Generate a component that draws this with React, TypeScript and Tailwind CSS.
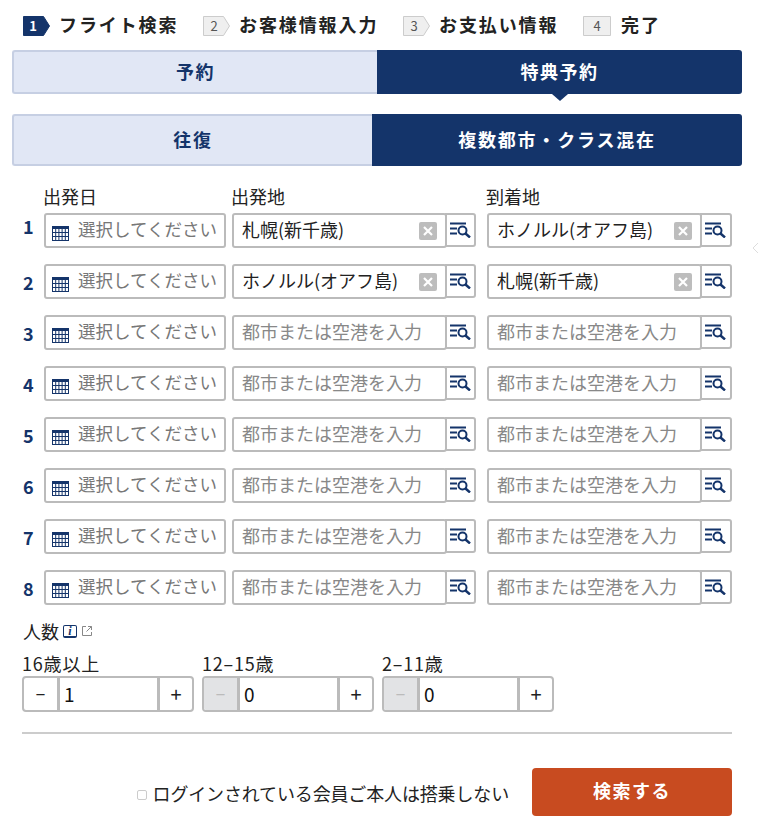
const font = { fontFamily: '"Noto Sans CJK JP", "Liberation Sans", sans-serif' };

const steps = [
  { n: "1", label: "フライト検索", active: true, arrow: true, width: "w-[180px]" },
  { n: "2", label: "お客様情報入力", arrow: true, width: "w-[200px]" },
  { n: "3", label: "お支払い情報", arrow: true, width: "w-[180px]" },
  { n: "4", label: "完了", width: "" },
];

const rows = [
  { n: 1, from: "札幌(新千歳)", to: "ホノルル(オアフ島)" },
  { n: 2, from: "ホノルル(オアフ島)", to: "札幌(新千歳)" },
  { n: 3 },
  { n: 4 },
  { n: 5 },
  { n: 6 },
  { n: 7 },
  { n: 8 },
];

function StepBadge({ n, active, arrow }: { n: string; active?: boolean; arrow?: boolean }) {
  const fill = active ? "#14346a" : "#efefef";
  const stroke = active ? "#14346a" : "#cccccc";
  return (
    <div className="relative h-5 w-[28px] shrink-0">
      <svg width="28" height="20" viewBox="0 0 28 20" className="absolute left-0 top-0">
        <path
          d={arrow ? "M.5.5H20.5L26.5 10L20.5 19.5H.5Z" : "M.5.5H27.5V19.5H.5Z"}
          fill={fill}
          stroke={stroke}
        />
      </svg>
      <span
        className={`absolute left-0 top-0 flex h-5 items-center justify-center text-[13px] ${
          active ? "w-[20px] font-bold text-white" : arrow ? "w-[22px] text-[#555]" : "w-[28px] text-[#555]"
        }`}
      >
        {n}
      </span>
    </div>
  );
}

function CalendarIcon() {
  return (
    <svg width="17" height="15" viewBox="0 0 17 15" className="shrink-0">
      <rect width="17" height="15" fill="#14346a" />
      {[3, 7, 11].map((y) =>
        [1, 4.2, 7.4, 10.6, 13.8].map((x) => (
          <rect key={`${x}-${y}`} x={x} y={y} width="2.2" height="3" fill="#fff" />
        )),
      )}
    </svg>
  );
}

function SearchListIcon() {
  return (
    <svg width="21" height="16" viewBox="0 0 21 16" fill="none" stroke="#14346a">
      <path d="M0 1.5H16M0 6.5H7M0 11.5H7" strokeWidth="2" />
      <circle cx="12.5" cy="8.5" r="4" strokeWidth="2" />
      <path d="M15.5 11.5L20 15.5" strokeWidth="2.4" />
    </svg>
  );
}

function ClearIcon() {
  return (
    <span className="absolute right-[8px] top-1/2 flex h-[18px] w-[18px] -translate-y-1/2 items-center justify-center rounded-[2px] bg-[#bdbdbd]">
      <svg width="10" height="10" viewBox="0 0 10 10" stroke="#fff" strokeWidth="2.2">
        <path d="M1 1L9 9M9 1L1 9" />
      </svg>
    </span>
  );
}

function DateField() {
  return (
    <div className="flex h-[35px] w-[182px] shrink-0 items-center gap-[9px] overflow-hidden rounded-[3px] border-2 border-[#bbbbbb] pl-[6px]">
      <span className="mt-[5px] flex"><CalendarIcon /></span>
      <span className="-translate-y-[2px] whitespace-nowrap text-[17.5px] leading-none text-[#777]">選択してください</span>
    </div>
  );
}

function CityField({ value, width }: { value?: string; width: string }) {
  return (
    <div className={`flex h-[35px] shrink-0 items-start ${width}`}>
      <div className="relative z-10 flex h-[35px] w-[215px] shrink-0 items-center rounded-[3px] border-2 border-[#bbbbbb] pl-[8px]">
        <span className={`-translate-y-[2px] whitespace-nowrap text-[18px] leading-none ${value ? "text-[#222]" : "text-[#888]"}`}>
          {value ?? "都市または空港を入力"}
        </span>
        {value && <ClearIcon />}
      </div>
      <div className="-ml-[2px] flex h-[34px] flex-1 items-center rounded-r-[3px] border-2 border-[#bbbbbb] pl-[3px]">
        <SearchListIcon />
      </div>
    </div>
  );
}

function Stepper({ value, label, disabled }: { value: string; label: string; disabled?: boolean }) {
  return (
    <div className="w-[172px]">
      <div className="mb-[1px] h-[23px] text-[18px] leading-[23px] tracking-[0.8px] text-[#222]">{label}</div>
      <div className="flex h-[36px] overflow-hidden rounded-[4px] border-2 border-[#bbbbbb]">
        <div
          className={`flex w-[36px] items-center justify-center border-r-[3px] border-[#bbbbbb] text-[17px] ${
            disabled ? "bg-[#e2e3e5] text-[#bbb]" : "text-[#222]"
          }`}
        >
          −
        </div>
        <div className="flex flex-1 items-center pl-[4px] text-[19px] text-[#111]">{value}</div>
        <div className="flex w-[35px] items-center justify-center border-l-[3px] border-[#bbbbbb] text-[20px] text-[#222]">
          +
        </div>
      </div>
    </div>
  );
}

export default function App() {
  return (
    <div className="relative h-[830px] w-[758px] overflow-hidden bg-white" style={font}>
      {/* step bar */}
      <div className="flex h-[50px] items-start pl-[23px] pt-[16px]">
        {steps.map((s) => (
          <div key={s.n} className={`flex items-center ${s.width}`}>
            <StepBadge n={s.n} active={s.active} arrow={s.arrow} />
            <span
              className={`-translate-y-[2px] whitespace-nowrap text-[18px] font-bold leading-[20px] tracking-[1.9px] text-[#222] ${
                s.arrow ? "ml-[8px]" : "ml-[10px]"
              }`}
            >
              {s.label}
            </span>
          </div>
        ))}
      </div>

      {/* tabs */}
      <div className="mx-[12px] flex h-[44px] w-[730px]">
        <div className="flex w-[365px] items-center justify-center rounded-l-[3px] border-2 border-r-0 border-[#c6cfe3] bg-[#e1e7f5] pb-[2px] text-[18px] font-bold tracking-[1.5px] text-[#14346a]">
          予約
        </div>
        <div className="relative flex w-[365px] items-center justify-center rounded-r-[3px] bg-[#14346a] pb-[2px] text-[18px] font-bold tracking-[1.5px] text-white">
          特典予約
          <span className="absolute left-1/2 top-full -translate-x-1/2 border-x-[8px] border-t-[7px] border-x-transparent border-t-[#14346a]" />
        </div>
      </div>

      <div className="mx-[12px] mt-[20px] flex h-[52px] w-[730px]">
        <div className="flex w-[360px] items-center justify-center rounded-l-[3px] border-2 border-r-0 border-[#c6cfe3] bg-[#e1e7f5] pb-[2px] text-[18px] font-bold tracking-[1.8px] text-[#14346a]">
          往復
        </div>
        <div className="flex w-[370px] items-center justify-center rounded-r-[3px] bg-[#14346a] pb-[2px] text-[18px] font-bold tracking-[1.8px] text-white">
          複数都市・クラス混在
        </div>
      </div>

      {/* segments */}
      <div className="mt-[20px] flex h-[27px] pl-[43px] text-[18px] leading-[20px] text-[#222]">
        <span className="w-[188px]">出発日</span>
        <span className="w-[255px]">出発地</span>
        <span>到着地</span>
      </div>
      <div className="flex flex-col gap-[16px] pl-[23px]">
        {rows.map((r) => (
          <div key={r.n} className="flex items-center">
            <span
              className={`w-[21px] text-[18px] font-bold leading-none text-[#14346a] ${
                r.n === 1 ? "-translate-y-[5px]" : ""
              }`}
            >
              {r.n}
            </span>
            <DateField />
            <div className="w-[6px]" />
            <CityField value={r.from} width="w-[244px]" />
            <div className="w-[11px]" />
            <CityField value={r.to} width="w-[245px]" />
          </div>
        ))}
      </div>

      {/* passengers */}
      <div className="mt-[14px] flex h-[24px] items-center pl-[23px] text-[18px] text-[#222]">
        人数
        <span
          className="ml-[4px] flex h-[13px] w-[14px] items-center justify-center rounded-[2px] border border-b-2 border-[#14346a] text-[12px] font-bold italic leading-none text-[#14346a]"
          style={{ fontFamily: '"Liberation Serif", serif' }}
        >
          i
        </span>
        <svg width="10" height="10" viewBox="0 0 10 10" fill="none" stroke="#888" className="ml-[5px]">
          <path d="M4 .5H.5V9.5H9.5V6M4.5 5.5L9.5 .5M6 .5H9.5V4" />
        </svg>
      </div>
      <div className="mt-[9px] flex gap-[8px] pl-[22px]">
        <Stepper label="16歳以上" value="1" />
        <Stepper label="12–15歳" value="0" disabled />
        <Stepper label="2–11歳" value="0" disabled />
      </div>

      <div className="ml-[22px] mt-[20px] h-[2px] w-[710px] bg-[#cccccc]" />

      {/* footer */}
      <div className="mt-[34px] flex h-[48px] w-[732px] items-center justify-end">
        <span className="mt-[5px] h-[10px] w-[10px] rounded-[2px] border border-[#cccccc]" />
        <span className="ml-[6px] mr-[23px] mt-[2px] text-[18px] leading-[24px] tracking-[-0.15px] text-[#222]">ログインされている会員ご本人は搭乗しない</span>
        <div className="flex h-[48px] w-[200px] items-center justify-center rounded-[4px] bg-[#c84b20] pb-[3px] text-[18px] font-bold tracking-[1.5px] text-white">
          検索する
        </div>
      </div>

      {/* carousel handle at the window edge */}
      <svg width="8" height="14" viewBox="0 0 8 14" fill="none" stroke="#dddddd" className="absolute left-[752px] top-[241px]">
        <path d="M7 1L1 7L7 13" />
      </svg>
    </div>
  );
}
